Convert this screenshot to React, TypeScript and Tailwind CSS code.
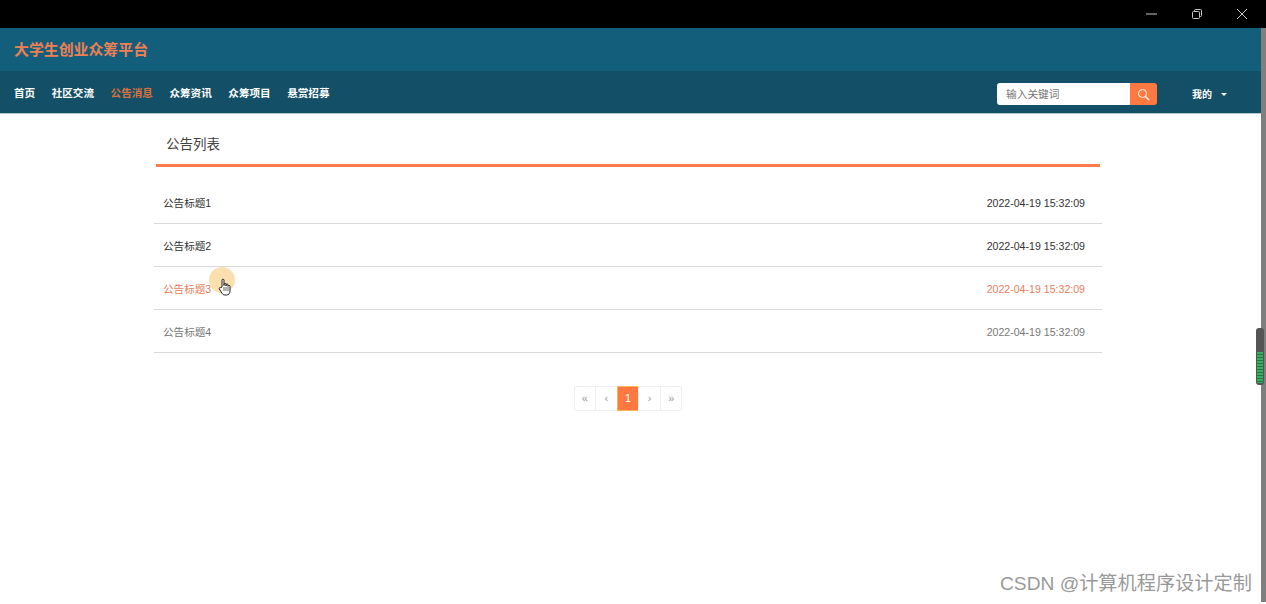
import React from "react";

const cjk = "font-['Liberation_Sans','Noto_Sans_CJK_SC',sans-serif]";
const navItems = ["首页", "社区交流", "公告消息", "众筹资讯", "众筹项目", "悬赏招募"];
const notices = [
  { title: "公告标题1", tone: "text-[#333]" },
  { title: "公告标题2", tone: "text-[#333]" },
  { title: "公告标题3", tone: "text-[#e9805c]" },
  { title: "公告标题4", tone: "text-[#777]" },
];

function TitleBar() {
  return (
    <div className="h-[28px] bg-black flex justify-end items-center text-[#c8c8c8]">
      <svg width="12" height="2" viewBox="0 0 12 2" className="mr-[33px]">
        <path d="M0 1h11" stroke="currentColor" />
      </svg>
      <svg width="12" height="12" viewBox="0 0 12 12" fill="none" stroke="currentColor" className="mr-[33px]">
        <rect x="1.5" y="3.5" width="7" height="7" rx="1" />
        <path d="M3.5 3.5v-1a1 1 0 0 1 1-1h5a1 1 0 0 1 1 1v5a1 1 0 0 1-1 1h-1" />
      </svg>
      <svg width="12" height="12" viewBox="0 0 12 12" stroke="currentColor" className="mr-[18px]">
        <path d="M1 1l10 10M11 1L1 11" />
      </svg>
    </div>
  );
}

function Pagination() {
  const cells = ["«", "‹", "1", "›", "»"];
  return (
    <div className="flex justify-center mt-[33px]">
      {cells.map((c, i) =>
        c === "1" ? (
          <span key={i} className="w-[22.6px] h-[25px] flex items-center justify-center bg-[#ff7840] border border-[#ffb45a] text-white text-[11px] -ml-px">
            {c}
          </span>
        ) : (
          <span
            key={i}
            className={`w-[22.6px] h-[25px] flex items-center justify-center bg-white border border-[#eee] text-[#999] text-[11px] ${i === 0 ? "rounded-l-[3px]" : "-ml-px"} ${i === 4 ? "rounded-r-[3px]" : ""}`}
          >
            {c}
          </span>
        )
      )}
    </div>
  );
}

export default function App() {
  return (
    <div className={`h-[604px] w-[1266px] overflow-hidden relative bg-white ${cjk}`}>
      <TitleBar />
      <div className="flex h-[574px]">
        <div className="flex-1 flex flex-col min-w-0">
          <div className="h-[43px] bg-[#135f7b] flex items-center pl-[14px] pt-[1px]">
            <span className="text-[14.900px] font-bold text-[#ef7f55]">大学生创业众筹平台</span>
          </div>
          <div className="h-[43px] bg-[#134f66] border-b border-[#b9c6cc] flex items-center pl-[14px] pt-[4px]">
            <div className="flex gap-[16.500px]">
              {navItems.map((n) => (
                <span key={n} className={`text-[10.6px] font-bold ${n === "公告消息" ? "text-[#d9723f]" : "text-white"}`}>
                  {n}
                </span>
              ))}
            </div>
            <div className="ml-auto flex items-center">
              <div className="w-[133px] h-[22px] bg-white rounded-l-[3px] flex items-center pl-[9px] text-[10.7px] text-[#777]">
                输入关键词
              </div>
              <div className="w-[27px] h-[22px] bg-[#ff7840] rounded-r-[3px] flex items-center justify-center">
                <svg width="13" height="13" viewBox="0 0 13 13" fill="none" stroke="white" strokeWidth="1">
                  <circle cx="5.5" cy="5.5" r="4" />
                  <path d="M8.5 8.5l3.5 3.5" strokeWidth="1.5" />
                </svg>
              </div>
              <div className="flex items-center ml-[35px] mr-[34px]">
                <span className="text-[10px] font-bold text-white">我的</span>
                <span className="ml-[9px] w-0 h-0 border-x-[3px] border-x-transparent border-t-[3px] border-t-white" />
              </div>
            </div>
          </div>
          <div className="w-[948px] ml-[154px]">
            <div className="ml-[2px] w-[944px] h-[53px] border-b-[3px] border-[#ff7d4a] flex items-center pl-[10px] pt-[13px]">
              <span className="text-[13.500px] text-[#444]">公告列表</span>
            </div>
            <div className="mt-[14px]">
              {notices.map((n) => (
                <div
                  key={n.title}
                  className={`h-[43px] border-b border-[#d9d9d9] flex items-center justify-between pl-[9px] pr-[17px] pt-[3px] text-[10.600px] ${n.tone}`}
                >
                  <span>{n.title}</span>
                  <span className="text-[10.600px]">2022-04-19 15:32:09</span>
                </div>
              ))}
            </div>
            <Pagination />
          </div>
        </div>
        <div className="w-[5px] bg-[#7f7f7f]" />
      </div>

      {/* recorded cursor highlight */}
      <div className="absolute left-[209px] top-[267px] w-[26px] h-[26px] rounded-full bg-[#fbdfae]" />
      <svg className="absolute left-[218px] top-[278px]" width="14" height="18" viewBox="0 0 14 18">
        <path
          d="M4 9V2.200a1 1 0 0 1 2 0V7.500V6.400a1 1 0 0 1 2 0V8V7a1 1 0 0 1 2 0v1.400a1 1 0 0 1 2 0V13c0 2-1.200 4-3.500 4H7c-1.600 0-2.400-.8-3.200-2L1.400 11c-.6-1 .6-2 1.500-1.200z"
          fill="white"
          stroke="#222"
          strokeWidth="1"
          strokeLinejoin="round"
        />
        <path d="M6 9v4M8 9v4M10 9v4" stroke="#222" strokeWidth="0.7" />
      </svg>

      {/* scroll thumb */}
      <div className="absolute left-[1256px] top-[328px] w-[8px] h-[57px] rounded-[3px] bg-[#555] overflow-hidden">
        <div className="mt-[24px] h-[31px] mx-[1px] bg-[repeating-linear-gradient(to_bottom,#35b060_0,#35b060_2px,#1f7a40_2px,#1f7a40_3px)]" />
      </div>

      <div className="absolute left-[1000px] top-[572px] text-[19.200px] leading-[24px] text-[#999] whitespace-nowrap">
        CSDN @计算机程序设计定制
      </div>
    </div>
  );
}
